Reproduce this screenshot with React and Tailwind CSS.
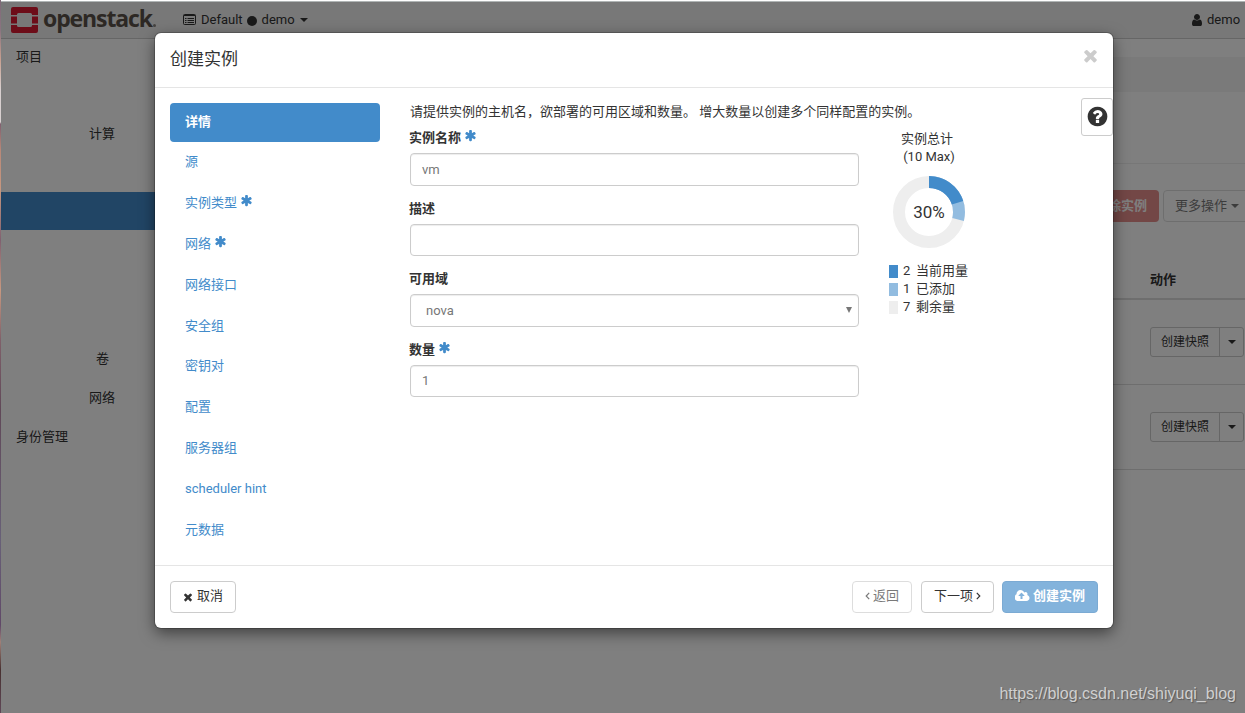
import clsx from 'clsx';

const ICONS = {
  asterisk:
    'M1546 922q46 26 59.5 77.5t-12.5 97.5l-64 110q-26 46-77.5 59.5t-97.5-12.5l-266-153v307q0 52-38 90t-90 38h-128q-52 0-90-38t-38-90v-307l-266 153q-46 26-97.5 12.5t-77.5-59.5l-64-110q-26-46-12.5-97.5t59.5-77.5l266-154-266-154q-46-26-59.5-77.5t12.5-97.5l64-110q26-46 77.5-59.5t97.5 12.5l266 153v-307q0-52 38-90t90-38h128q52 0 90 38t38 90v307l266-153q46-26 97.5-12.5t77.5 59.5l64 110q26 46 12.5 97.5t-59.5 77.5l-266 154z',
  times:
    'M1490 1322q0 40-28 68l-136 136q-28 28-68 28t-68-28l-294-294-294 294q-28 28-68 28t-68-28l-136-136q-28-28-28-68t28-68l294-294-294-294q-28-28-28-68t28-68l136-136q28-28 68-28t68 28l294 294 294-294q28-28 68-28t68 28l136 136q28 28 28 68t-28 68l-294 294 294 294q28 28 28 68z',
  user:
    'M1536 1399q0 109-62.5 187t-150.5 78h-854q-88 0-150.5-78t-62.5-187q0-85 8.5-160.5t31.5-152 58.5-131 94-89 134.5-34.5q131 128 313 128t313-128q76 0 134.5 34.5t94 89 58.5 131 31.5 152 8.5 160.5zm-256-887q0 159-112.5 271.5t-271.5 112.5-271.5-112.5-112.5-271.5 112.5-271.5 271.5-112.5 271.5 112.5 112.5 271.5z',
  cloudUpload:
    'M1216 864q0-14-9-23l-352-352q-9-9-23-9t-23 9l-351 351q-10 12-10 24 0 14 9 23t23 9h224v352q0 13 9.5 22.5t22.5 9.5h192q13 0 22.5-9.5t9.5-22.5v-352h224q13 0 22.5-9.5t9.5-22.5zm640 288q0 159-112.5 271.5t-271.5 112.5h-1088q-185 0-316.5-131.5t-131.5-316.5q0-130 70-240t188-165q-2-30-2-43 0-212 150-362t362-150q156 0 285.5 87t188.5 231q71-62 166-62 106 0 181 75t75 181q0 76-41 138 130 31 213.5 135.5t83.5 238.5z',
  question:
    'M1024 1376v-192q0-14-9-23t-23-9h-192q-14 0-23 9t-9 23v192q0 14 9 23t23 9h192q14 0 23-9t9-23zm256-672q0-88-55.5-163t-138.5-116-170-41q-243 0-371 213-15 24 8 42l132 100q7 6 19 6 16 0 25-12 53-68 86-92 34-24 86-24 48 0 85.5 26t37.5 59q0 38-20 61t-68 45q-63 28-115.5 86.5t-52.5 125.5v36q0 14 9 23t23 9h192q14 0 23-9t9-23q0-19 21.5-49.5t54.5-49.5q32-18 49-28.5t46-35 44.5-48 28-60.5 12.5-81zm384 192q0 209-103 385.5t-279.5 279.5-385.5 103-385.5-103-279.5-279.5-103-385.5 103-385.5 279.5-279.5 385.5-103 385.5 103 279.5 279.5 103 385.5z',
};

function Icon({ name, className }) {
  return (
    <svg
      viewBox={name === 'cloudUpload' ? '0 0 1920 1792' : '0 0 1792 1792'}
      fill="currentColor"
      className={clsx('shrink-0', className)}
    >
      <path d={ICONS[name]} />
    </svg>
  );
}

function Caret({ className }) {
  return (
    <svg viewBox="0 0 8 4" fill="currentColor" className={clsx('h-1 w-2 shrink-0', className)}>
      <path d="M0 0h8L4 4z" />
    </svg>
  );
}

function Angle({ left }) {
  return (
    <svg viewBox="0 0 5 8" fill="none" stroke="currentColor" strokeWidth="1.2" className="h-2 w-[5px] shrink-0">
      <path d={left ? 'M4.2 .8L1.2 4l3 3.2' : 'M.8 .8l3 3.2-3 3.2'} />
    </svg>
  );
}

function Logo() {
  return (
    <div className="flex items-center">
      <svg viewBox="0 0 27 26" className="h-[26px] w-[27px]">
        <path
          d="M2 0h23a2 2 0 0 1 2 2v6h-6V7.500a1.500 1.500 0 0 0-1.500-1.500h-12A1.500 1.500 0 0 0 6 7.500V8H0V2a2 2 0 0 1 2-2zM0 9.500h6v7H0zM21 9.500h6v7h-6zM0 18h6v.5A1.500 1.500 0 0 0 7.500 20h12a1.500 1.500 0 0 0 1.500-1.500V18h6v6a2 2 0 0 1-2 2H2a2 2 0 0 1-2-2z"
          fill="#da1a32"
        />
      </svg>
      <span className="ml-[5px] -mt-[5px] w-[110px] font-['Open_Sans',sans-serif] text-[23px] leading-[26px] font-bold tracking-[-1.100px] text-[#5a5048]">
        openstack
      </span>
      <span className="mt-[11px] size-[3px] rounded-full bg-[#8a8580]" />
    </div>
  );
}

function Navbar() {
  return (
    <header className="flex h-[37px] items-center border-b border-[#ccc] bg-[#f0f0f0] pl-2.5">
      <Logo />
      <div className="-mt-px ml-[27px] flex items-center">
        <svg viewBox="0 0 13 11" className="mr-[5px] h-[11px] w-[13px]" fill="none" stroke="currentColor">
          <rect x=".5" y=".5" width="12" height="10" rx="1" />
          <path d="M1 1.500h11M2 4.500h1.500M4.500 4.500H11M2 6.500h1.500M4.500 6.500H11M2 8.500h1.500M4.500 8.500H11" />
        </svg>
        <span>Default</span>
        <span className="mr-[5px] ml-1 mt-0.5 size-2.5 rounded-full bg-[#333]" />
        <span>demo</span>
        <Caret className="ml-[5px]" />
      </div>
      <div className="-mt-px ml-auto flex w-[55px] items-center overflow-hidden">
        <Icon name="user" className="mr-[3px] size-[14px]" />
        <span>demo</span>
        <Caret className="ml-[5px]" />
      </div>
    </header>
  );
}

function SnapshotRow() {
  return (
    <div className="flex h-[85px] items-center justify-end border-b border-[#ddd] pr-px">
      <div className="flex h-[30px] w-[94px] rounded-[3px] border border-[#ccc] text-xs">
        <span className="flex flex-1 items-center justify-center border-r border-[#ccc]">创建快照</span>
        <span className="flex w-[23px] items-center justify-center">
          <Caret />
        </span>
      </div>
    </div>
  );
}

function Dashboard() {
  return (
    <div className="flex h-full flex-col bg-white">
      <Navbar />
      <div className="flex flex-1">
        <aside className="flex w-[154px] flex-col">
          <div className="flex h-9 items-center pl-[15px]">项目</div>
          <div className="mt-[39px] flex h-10 items-center pl-[88px]">计算</div>
          <div className="mt-[38px] h-[38px] bg-[#428bca]" />
          <div className="mt-[109px] flex h-[39px] items-center pl-[95px]">卷</div>
          <div className="flex h-[39px] items-center pl-[88px]">网络</div>
          <div className="flex h-[39px] items-center pl-[15px]">身份管理</div>
        </aside>
        <main className="flex flex-1 flex-col pt-[18px]">
          <div className="h-[35px] bg-[#f5f5f5]" />
          <div className="h-[72px] border-b border-[#eee]" />
          <div className="mt-[26px] flex h-8 justify-end">
            <span className="mr-1 flex items-center rounded bg-[#d9534f] px-3 font-bold text-white opacity-65">
              删除实例
            </span>
            <span className="-mr-1 flex w-[86px] items-center rounded border border-[#ccc] pl-[11px] opacity-65">
              更多操作
              <Caret className="ml-1" />
            </span>
          </div>
          <div className="flex h-[78px] items-end justify-end border-b-2 border-[#ddd] pb-[9px] font-bold">
            <span className="w-[95px]">动作</span>
          </div>
          <SnapshotRow />
          <SnapshotRow />
        </main>
      </div>
    </div>
  );
}

const STEPS = [
  { label: '详情', active: true },
  { label: '源' },
  { label: '实例类型', required: true },
  { label: '网络', required: true },
  { label: '网络接口' },
  { label: '安全组' },
  { label: '密钥对' },
  { label: '配置' },
  { label: '服务器组' },
  { label: 'scheduler hint' },
  { label: '元数据' },
];

function Required() {
  return <Icon name="asterisk" className="-mt-[3px] ml-[3px] size-[13px] text-[#428bca]" />;
}

function Field({ label, required, children }) {
  return (
    <div className="mb-[14px] h-[56.600px]">
      <div className="-ml-px flex h-[24px] items-center pb-[6px] font-bold">
        {label}
        {required && <Required />}
      </div>
      <div className="flex h-[32.600px] items-center rounded border border-[#ccc] px-[11px] text-[#777] shadow-[inset_0_1px_1px_rgba(0,0,0,0.075)]">
        {children}
      </div>
    </div>
  );
}

const LEGEND = [
  { count: 2, label: '当前用量', swatch: 'bg-[#428bca]' },
  { count: 1, label: '已添加', swatch: 'bg-[#92bce0]' },
  { count: 7, label: '剩余量', swatch: 'bg-[#eee]' },
];

function QuotaChart() {
  return (
    <div className="flex w-[140px] flex-col items-center">
      <div className="pt-px pr-[4px] leading-[18px]">实例总计</div>
      <div className="leading-[18px]">(10 Max)</div>
      <div className="relative mt-[10px]">
        <svg viewBox="0 0 72 72" className="size-[72px] -rotate-90" fill="none" strokeWidth="12">
          <circle cx="36" cy="36" r="30" stroke="#eee" />
          <circle cx="36" cy="36" r="30" stroke="#92bce0" pathLength="100" strokeDasharray="29 71" />
          <circle cx="36" cy="36" r="30" stroke="#428bca" pathLength="100" strokeDasharray="20 80" />
        </svg>
        <span className="absolute inset-0 flex items-center justify-center pt-px text-[17px]">30%</span>
      </div>
      <ul className="mt-[14px] self-start pl-[30px]">
        {LEGEND.map((item) => (
          <li key={item.label} className="flex h-[18px] items-center">
            <span className={clsx('h-[13px] w-[9px]', item.swatch)} />
            <span className="ml-[5px] w-[13px]">{item.count}</span>
            {item.label}
          </li>
        ))}
      </ul>
    </div>
  );
}

function LaunchModal() {
  return (
    <div className="absolute top-[33px] left-[155px] flex h-[595px] w-[958px] flex-col rounded-md bg-white shadow-[0_0_0_1px_rgba(0,0,0,0.2),0_5px_15px_rgba(0,0,0,0.5)]">
      <div className="flex h-[55px] items-center justify-between border-b border-[#e5e5e5] pr-[13px] pl-[15px]">
        <h4 className="text-[17px]">创建实例</h4>
        <Icon name="times" className="-mt-[10px] size-[19px] text-[#ccc]" />
      </div>

      <div className="flex flex-1 pt-[15px] pl-[15px]">
        <ul className="w-[210px] text-[#428bca]">
          {STEPS.map((step) => (
            <li
              key={step.label}
              className={clsx(
                'mb-[2px] flex h-[38.800px] items-center rounded pb-[2px] pl-[15px]',
                step.active && 'bg-[#428bca] font-bold text-white'
              )}
            >
              {step.label}
              {step.required && <Required />}
            </li>
          ))}
        </ul>
        <div className="ml-[30px] flex-1">
          <p className="h-[26px] leading-[17px]">
            请提供实例的主机名，欲部署的可用区域和数量。 增大数量以创建多个同样配置的实例。
          </p>
          <div className="flex">
            <div className="w-[449px]">
              <Field label="实例名称" required>
                vm
              </Field>
              <Field label="描述" />
              <Field label="可用域">
                <span className="pl-1">nova</span>
                <svg viewBox="0 0 6 6" fill="currentColor" className="-mr-[5px] ml-auto size-1.5">
                  <path d="M0 0h6L3 6z" />
                </svg>
              </Field>
              <Field label="数量" required>
                1
              </Field>
            </div>
            <QuotaChart />
          </div>
        </div>
        <button className="-mt-[5px] flex h-[38px] w-8 items-center justify-center rounded-[3px] border border-[#ccc] pb-0.5">
          <Icon name="question" className="size-[23px]" />
        </button>
      </div>

      <div className="flex h-[63px] items-center border-t border-[#e5e5e5] px-[15px]">
        <button className="flex h-8 w-[66px] items-center justify-center rounded border border-[#ccc] pr-px pb-0.5">
          <Icon name="times" className="mt-px mr-[3px] size-[12px]" />
          取消
        </button>
        <button className="ml-auto flex h-8 w-[60px] items-center justify-center gap-[3px] rounded border border-[#ccc] pb-0.5 opacity-65">
          <Angle left />
          返回
        </button>
        <button className="ml-[9px] flex h-8 w-[73px] items-center justify-center gap-[3px] rounded border border-[#ccc] pb-0.5">
          下一项
          <Angle />
        </button>
        <button className="ml-2 flex h-8 w-24 items-center justify-center rounded border border-[#357ebd] bg-[#428bca] pb-0.5 font-bold text-white opacity-65">
          <Icon name="cloudUpload" className="mr-[3px] h-[14px] w-[15px]" />
          创建实例
        </button>
      </div>
    </div>
  );
}

function App() {
  return (
    <div className="relative flex h-[713px] w-[1245px] overflow-hidden font-['Roboto','Noto_Sans_CJK_SC',sans-serif] text-[13px] text-[#333]">
      <div className="w-px bg-[linear-gradient(#806a78_0px,#8a7480_30px,#c8a090_60px,#d8d0d0_90px,#d8d0d0_122px,#806070_124px,#b88878_150px,#c89880_190px,#806070_240px,#c89880_290px,#80606a_340px,#604858_410px,#686078_540px,#604868_625px,#a08078_642px,#483030_670px,#604858_713px)]" />
      <div className="flex flex-1 flex-col bg-[linear-gradient(#fff_0px,#fff_1px,#b0b5b5_1px)] pt-0.5">
        <div className="relative flex-1">
          <Dashboard />
          <div className="absolute inset-0 bg-black/50" />
        </div>
      </div>
      <LaunchModal />
      <div className="absolute right-[9px] bottom-[9px] font-['Liberation_Sans',sans-serif] text-base leading-[20px] text-[#d0d0d0] [text-shadow:1px_1px_1px_rgba(0,0,0,0.3)]">
        https://blog.csdn.net/shiyuqi_blog
      </div>
    </div>
  );
}

export default App;
